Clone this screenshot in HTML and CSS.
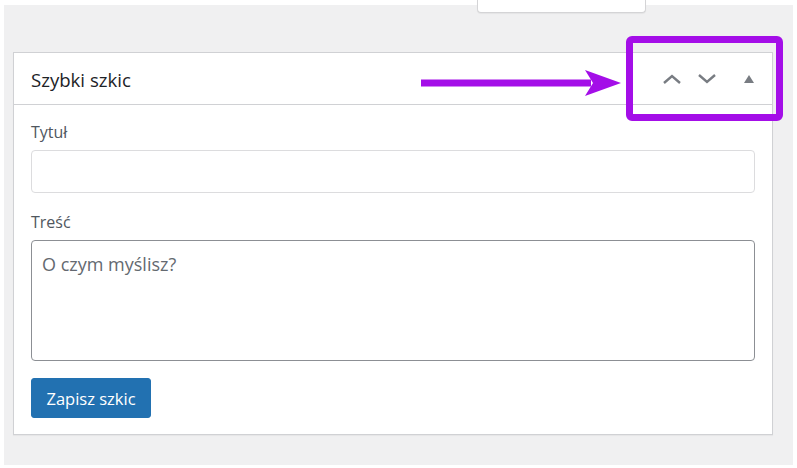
FILE: index.html
```html
<!DOCTYPE html>
<html lang="pl">
<head>
<meta charset="utf-8">
<title>Szybki szkic</title>
<link rel="stylesheet" href="styles.css">
</head>
<body>
<div class="screen">
  <div class="tab-row"><div class="screen-tab"></div></div>
  <div class="postbox">
    <div class="postbox-header">
      <h2 class="postbox-title">Szybki szkic</h2>
      <div class="handle-actions">
        <button class="handle-btn" type="button" aria-label="Przenieś w górę">
          <svg width="20" height="12" viewBox="0 0 20 12"><polyline points="2,10 10,3 18,10" fill="none" stroke="#787c82" stroke-width="2.4" stroke-linejoin="miter"/></svg>
        </button>
        <button class="handle-btn" type="button" aria-label="Przenieś w dół">
          <svg width="20" height="12" viewBox="0 0 20 12"><polyline points="2,2 10,9 18,2" fill="none" stroke="#787c82" stroke-width="2.4" stroke-linejoin="miter"/></svg>
        </button>
        <button class="handle-btn toggle" type="button" aria-label="Zwiń">
          <svg width="10" height="8" viewBox="0 0 10 8"><polygon points="5,0 10,8 0,8" fill="#787c82"/></svg>
        </button>
      </div>
      <div class="annot-arrow">
        <svg width="200" height="30" viewBox="0 0 200 30"><line x1="0" y1="14" x2="170" y2="14" stroke="#a40ee8" stroke-width="7"/><polygon points="164,1 200,14 164,27 172,14" fill="#a40ee8"/></svg>
      </div>
      <div class="annot-box"></div>
    </div>
    <form class="postbox-inside">
      <label class="field-label" for="title">Tytuł</label>
      <input class="text-input" id="title" type="text">
      <label class="field-label" for="content">Treść</label>
      <textarea class="text-area" id="content" placeholder="O czym myślisz?"></textarea>
      <div class="actions"><button class="btn-primary" type="button">Zapisz szkic</button></div>
    </form>
  </div>
</div>
</body>
</html>
```
FILE: styles.css
```css
html, body {
  margin: 0;
  padding: 0;
  background: #ffffff;
}
body {
  font-family: "Open Sans", "Noto Sans", sans-serif;
  width: 797px;
  height: 468px;
  overflow: hidden;
}
.screen {
  margin: 5px 4px 0 4px;
  height: 460px;
  background: #f0f0f1;
  padding-left: 9px;
  box-sizing: border-box;
}
.tab-row {
  display: flex;
  padding-left: 464px;
}
.screen-tab {
  margin-top: -5px;
  width: 167px;
  height: 12px;
  background: #ffffff;
  border: 1px solid #d4d4d6;
  border-top: none;
  border-radius: 0 0 4px 4px;
  box-shadow: 0 1px 1px rgba(0,0,0,.05);
}
.postbox {
  position: relative;
  margin-top: 39px;
  width: 760px;
  height: 383px;
  box-sizing: border-box;
  background: #ffffff;
  border: 1px solid #d0d1d4;
  box-shadow: 0 1px 1px rgba(0,0,0,.04);
}
.postbox-header {
  position: relative;
  height: 51px;
  border-bottom: 1px solid #d0d1d4;
  display: flex;
  align-items: center;
  justify-content: space-between;
  padding-left: 17px;
}
.postbox-title {
  margin: 2px 0 0 0;
  font-size: 18.6px;
  font-weight: 400;
  color: #1d2327;
}
.handle-actions {
  display: flex;
  align-items: center;
  margin-right: -2px;
}
.handle-btn {
  background: none;
  border: none;
  padding: 0;
  margin: 0;
  width: 35px;
  height: 36px;
  display: flex;
  align-items: center;
  justify-content: center;
}
.handle-btn.toggle {
  width: 50px;
}
.annot-arrow {
  position: absolute;
  left: 407px;
  top: 16px;
  line-height: 0;
}
.annot-box {
  position: absolute;
  left: 612px;
  top: -17px;
  width: 157px;
  height: 85px;
  box-sizing: border-box;
  border: 7px solid #a40ee8;
  border-radius: 6px;
}
.postbox-inside {
  padding: 16px 17px 0 17px;
  display: flex;
  flex-direction: column;
}
.field-label {
  font-size: 16px;
  line-height: 22px;
  color: #50575e;
  margin-bottom: 7px;
}
.text-input {
  height: 43px;
  box-sizing: border-box;
  border: 1px solid #dcdcde;
  border-radius: 4px;
  margin: 0 0 18px 0;
  padding: 0 10px;
  font-family: inherit;
  font-size: 17px;
}
.text-area {
  height: 121px;
  box-sizing: border-box;
  border: 1px solid #8c8f94;
  border-radius: 4px;
  margin: 0;
  padding: 11px 10px;
  font-family: inherit;
  font-size: 18px;
  line-height: 24px;
  resize: none;
}
.text-area::placeholder {
  color: #646970;
  opacity: 1;
}
.actions {
  display: flex;
  margin-top: 17px;
}
.btn-primary {
  width: 120px;
  height: 40px;
  background: #2271b1;
  border: 1px solid #2271b1;
  border-radius: 3px;
  color: #ffffff;
  font-family: inherit;
  font-size: 16.5px;
  padding: 0;
}
```
